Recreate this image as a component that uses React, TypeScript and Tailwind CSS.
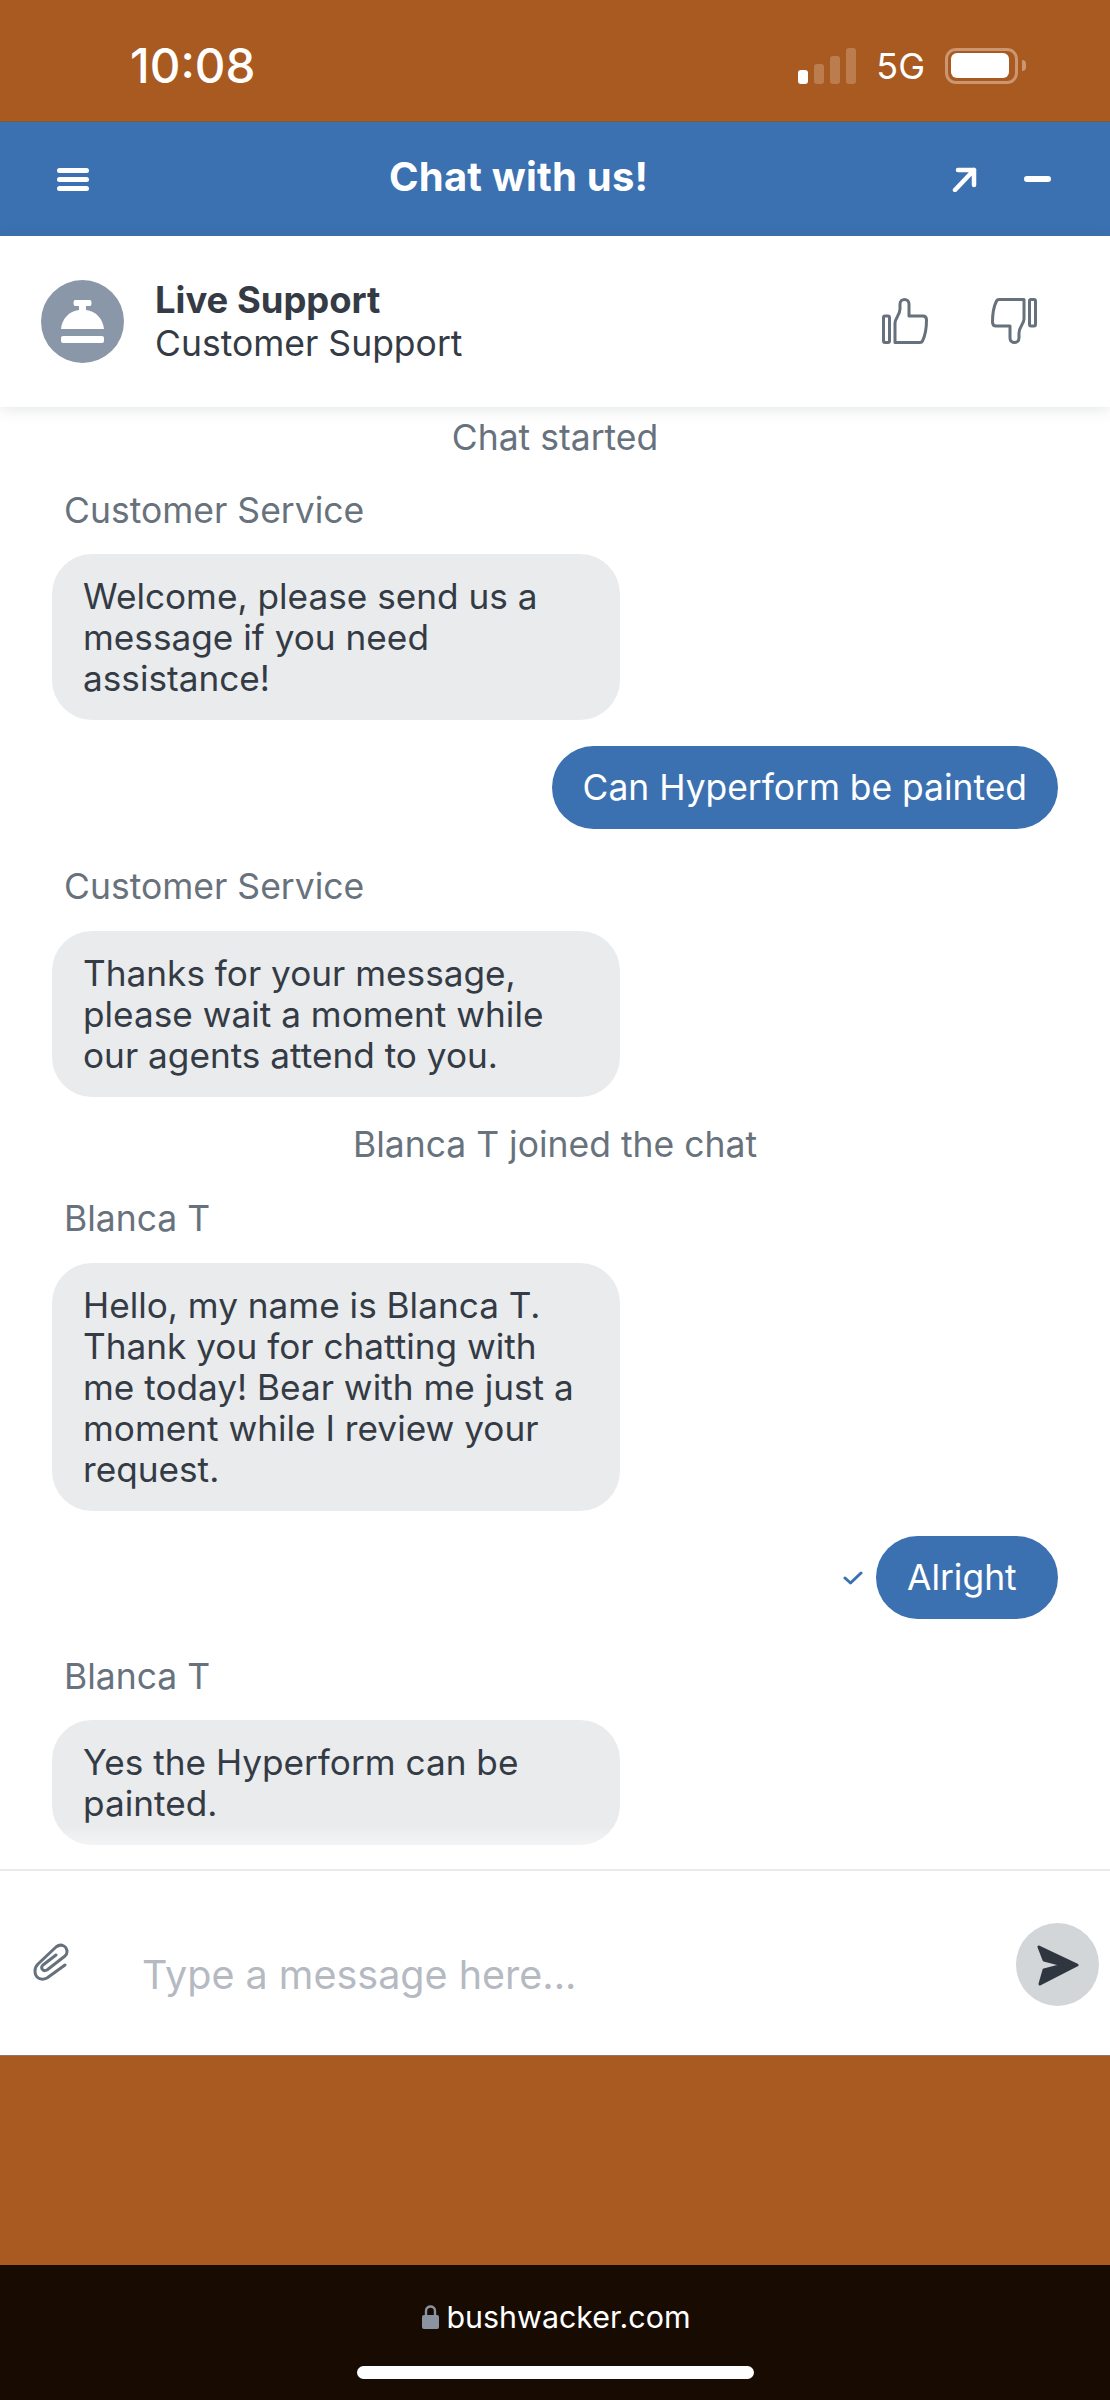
import type { ReactNode } from "react";

const FONT = "font-['Inter','Liberation_Sans',sans-serif]";

function StatusBar() {
  return (
    <div className="flex h-[122px] items-center justify-between border-b border-[#7a5a3a] bg-[#a85a21] pl-[130px] pr-[84px] pt-[10px] text-white">
      <span className="text-[47.5px] font-medium leading-none">10:08</span>
      <div className="flex items-center">
        <div className="flex h-[36px] items-end gap-[6px]">
          <span className="h-[14px] w-[10px] rounded-[3px] bg-white" />
          <span className="h-[20px] w-[10px] rounded-[3px] bg-[#bb7d4e]" />
          <span className="h-[28px] w-[10px] rounded-[3px] bg-[#bb7d4e]" />
          <span className="h-[36px] w-[10px] rounded-[3px] bg-[#bb7d4e]" />
        </div>
        <span className="ml-[20px] text-[36px] leading-none">5G</span>
        <div className="ml-[20px] flex h-[36px] w-[73px] items-center rounded-[11px] border-[3px] border-[#cb9670] pl-[3px]">
          <span className="h-[25px] w-[58px] rounded-[6px] bg-white" />
        </div>
        <span className="ml-[4px] h-[11px] w-[4px] rounded-r-full bg-[#cb9670]" />
      </div>
    </div>
  );
}

function TitleBar() {
  return (
    <div className="flex h-[114px] items-center bg-[#3b71b1] pl-[57px] pr-[59px] text-white">
      <div className="flex w-[32px] flex-col gap-[4px]">
        <span className="h-[5px] rounded-full bg-white" />
        <span className="h-[5px] rounded-full bg-white" />
        <span className="h-[5px] rounded-full bg-white" />
      </div>
      <span className="mb-[5px] ml-[300px] w-[259px] whitespace-nowrap text-[40px] font-bold leading-none tracking-[0.2px]">Chat with us!</span>
      <svg className="ml-[304px]" width="25" height="25" viewBox="0 0 25 25" fill="none" stroke="white" strokeWidth="4.5" strokeLinecap="round" strokeLinejoin="round">
        <path d="M3 23 L22 3 M6 3 H22 V18" />
      </svg>
      <span className="ml-[47px] h-[6px] w-[27px] rounded-full bg-white" />
    </div>
  );
}

function Thumb({ down }: { down?: boolean }) {
  return (
    <svg className={down ? "rotate-180" : ""} width="46" height="46" viewBox="0 0 46 46" fill="none" stroke="#67717d" strokeWidth="3" strokeLinejoin="round">
      <rect x="1.5" y="18" width="6" height="26.5" rx="1.5" />
      <path d="M13 44.5 V25 C13 20 18 17 18 11 V6 C18 0 27 0 27 6 V18 H41 C44 18 44.5 20 44.5 22 C44.5 30 43 38 40.5 43 C40 44 39 44.5 38 44.5 Z" />
    </svg>
  );
}

function AgentHeader() {
  return (
    <div className="relative z-10 flex h-[171px] items-center bg-white pl-[41px] pr-[73px] shadow-[0_2px_14px_rgba(60,70,80,0.14)]">
      <div className="flex size-[83px] items-center justify-center rounded-full bg-[#8a97a8]">
        <svg width="43" height="43" viewBox="0 0 43 43" fill="white">
          <path d="M14 0 H29 C31 0 31 6 29 6 H25 V10 C35 11 42 19 43 29 H0 C1 19 8 11 18 10 V6 H14 C12 6 12 0 14 0 Z" />
          <rect x="0" y="36" width="43" height="7" rx="2" />
        </svg>
      </div>
      <div className="ml-[31px] mt-[1px] flex flex-col">
        <span className="text-[36.4px] font-bold leading-[44px] text-[#343b45]">Live Support</span>
        <span className="text-[35.5px] leading-[44px] text-[#343b45]">Customer Support</span>
      </div>
      <div className="mb-[2px] ml-auto flex gap-[63px]">
        <Thumb />
        <Thumb down />
      </div>
    </div>
  );
}

function Notice({ children, className }: { children: ReactNode; className: string }) {
  return <div className={`text-center text-[35.5px] leading-[44px] text-[#68727d] ${className}`}>{children}</div>;
}

function Sender({ children, className }: { children: ReactNode; className: string }) {
  return <div className={`pl-[64px] text-[35.5px] leading-[44px] text-[#68727d] ${className}`}>{children}</div>;
}

function AgentBubble({ lines, className }: { lines: string[]; className: string }) {
  return (
    <div className={`ml-[52px] w-[568px] rounded-[40px] bg-[#e9ebed] pl-[31px] pr-[32px] pt-[22px] pb-[21px] text-[35.2px] leading-[41px] text-[#343b45] ${className}`}>
      {lines.map((line) => (
        <div key={line} className="whitespace-nowrap">{line}</div>
      ))}
    </div>
  );
}

function UserBubble({ children, className, sent }: { children: ReactNode; className: string; sent?: boolean }) {
  return (
    <div className={`flex items-center justify-end pr-[52px] ${className}`}>
      {sent && (
        <svg className="mr-[13px]" width="20" height="14" viewBox="0 0 20 14" fill="none" stroke="#3b71b1" strokeWidth="3" strokeLinecap="round" strokeLinejoin="round">
          <path d="M2 7 L7.5 12 L18 2" />
        </svg>
      )}
      <div className="min-w-[182px] rounded-full bg-[#3b71b1] px-[31px] py-[21px] text-[35.4px] leading-[41px] text-white">{children}</div>
    </div>
  );
}

function Transcript() {
  return (
    <div className="relative h-[1462px] overflow-hidden bg-white pt-[9px]">
      <Notice className="">Chat started</Notice>
      <Sender className="mt-[29px]">Customer Service</Sender>
      <AgentBubble className="mt-[21px]" lines={["Welcome, please send us a", "message if you need", "assistance!"]} />
      <UserBubble className="mt-[26px]">Can Hyperform be painted</UserBubble>
      <Sender className="mt-[36px]">Customer Service</Sender>
      <AgentBubble className="mt-[22px]" lines={["Thanks for your message,", "please wait a moment while", "our agents attend to you."]} />
      <Notice className="mt-[26px]">Blanca T joined the chat</Notice>
      <Sender className="mt-[30px]">Blanca T</Sender>
      <AgentBubble
        className="mt-[22px]"
        lines={[
          "Hello, my name is Blanca T.",
          "Thank you for chatting with",
          "me today! Bear with me just a",
          "moment while I review your",
          "request.",
        ]}
      />
      <UserBubble className="mt-[25px]" sent>Alright</UserBubble>
      <Sender className="mt-[36px]">Blanca T</Sender>
      <AgentBubble className="mt-[21px]" lines={["Yes the Hyperform can be", "painted."]} />
      <div className="absolute inset-x-0 bottom-0 h-[44px] bg-gradient-to-b from-white/0 to-white" />
    </div>
  );
}

function Composer() {
  return (
    <div className="flex h-[186px] border-t-2 border-[#e9ebed] bg-white">
      <svg className="ml-[33px] mt-[72px]" width="36" height="39" viewBox="0 0 36 39" fill="none" stroke="#67717d" strokeWidth="3" strokeLinecap="round" strokeLinejoin="round">
        <path d="M32 22 L14 35 C8 38 2 35 2 28 C2 25 3 23 5 21 L23 4 C28 0 34 3 34 9 C34 11 33 12 32 13 L14 27 C10 29 7 25 10 22 L23 12" />
      </svg>
      <span className="ml-[73px] mt-[82px] text-[39.5px] leading-[44px] text-[#b5bac2]">Type a message here...</span>
      <div className="ml-auto mr-[11px] mt-[52px] flex size-[83px] items-center justify-center rounded-full bg-[#d3d6d9]">
        <svg width="42" height="42" viewBox="0 0 42 42" fill="#2f3640" stroke="#2f3640" strokeWidth="3" strokeLinejoin="round">
          <path d="M2 3 L40 21 L3 40 L7 26 L26 21 L7 16 Z" />
        </svg>
      </div>
    </div>
  );
}

function BrowserBar() {
  return (
    <div className="flex h-[135px] flex-col items-center bg-[#180c02] pt-[34px]">
      <div className="ml-[3px] flex items-center">
        <svg width="17" height="24" viewBox="0 0 17 24">
          <path d="M4 11 V6 C4 0 13 0 13 6 V11" fill="none" stroke="#8c93a0" strokeWidth="2.4" />
          <rect x="0" y="10" width="17" height="14" rx="2" fill="#8c93a0" />
        </svg>
        <span className="ml-[7px] text-[30.4px] leading-[36px] text-white">bushwacker.com</span>
      </div>
      <span className="mt-[31px] h-[13px] w-[397px] rounded-full bg-white" />
    </div>
  );
}

export default function App() {
  return (
    <div className={`flex h-[2400px] w-[1110px] flex-col bg-[#a85a21] ${FONT}`}>
      <StatusBar />
      <TitleBar />
      <AgentHeader />
      <Transcript />
      <Composer />
      <div className="h-[210px] border-t border-[#8d7a68] bg-[#a85a21]" />
      <BrowserBar />
    </div>
  );
}
